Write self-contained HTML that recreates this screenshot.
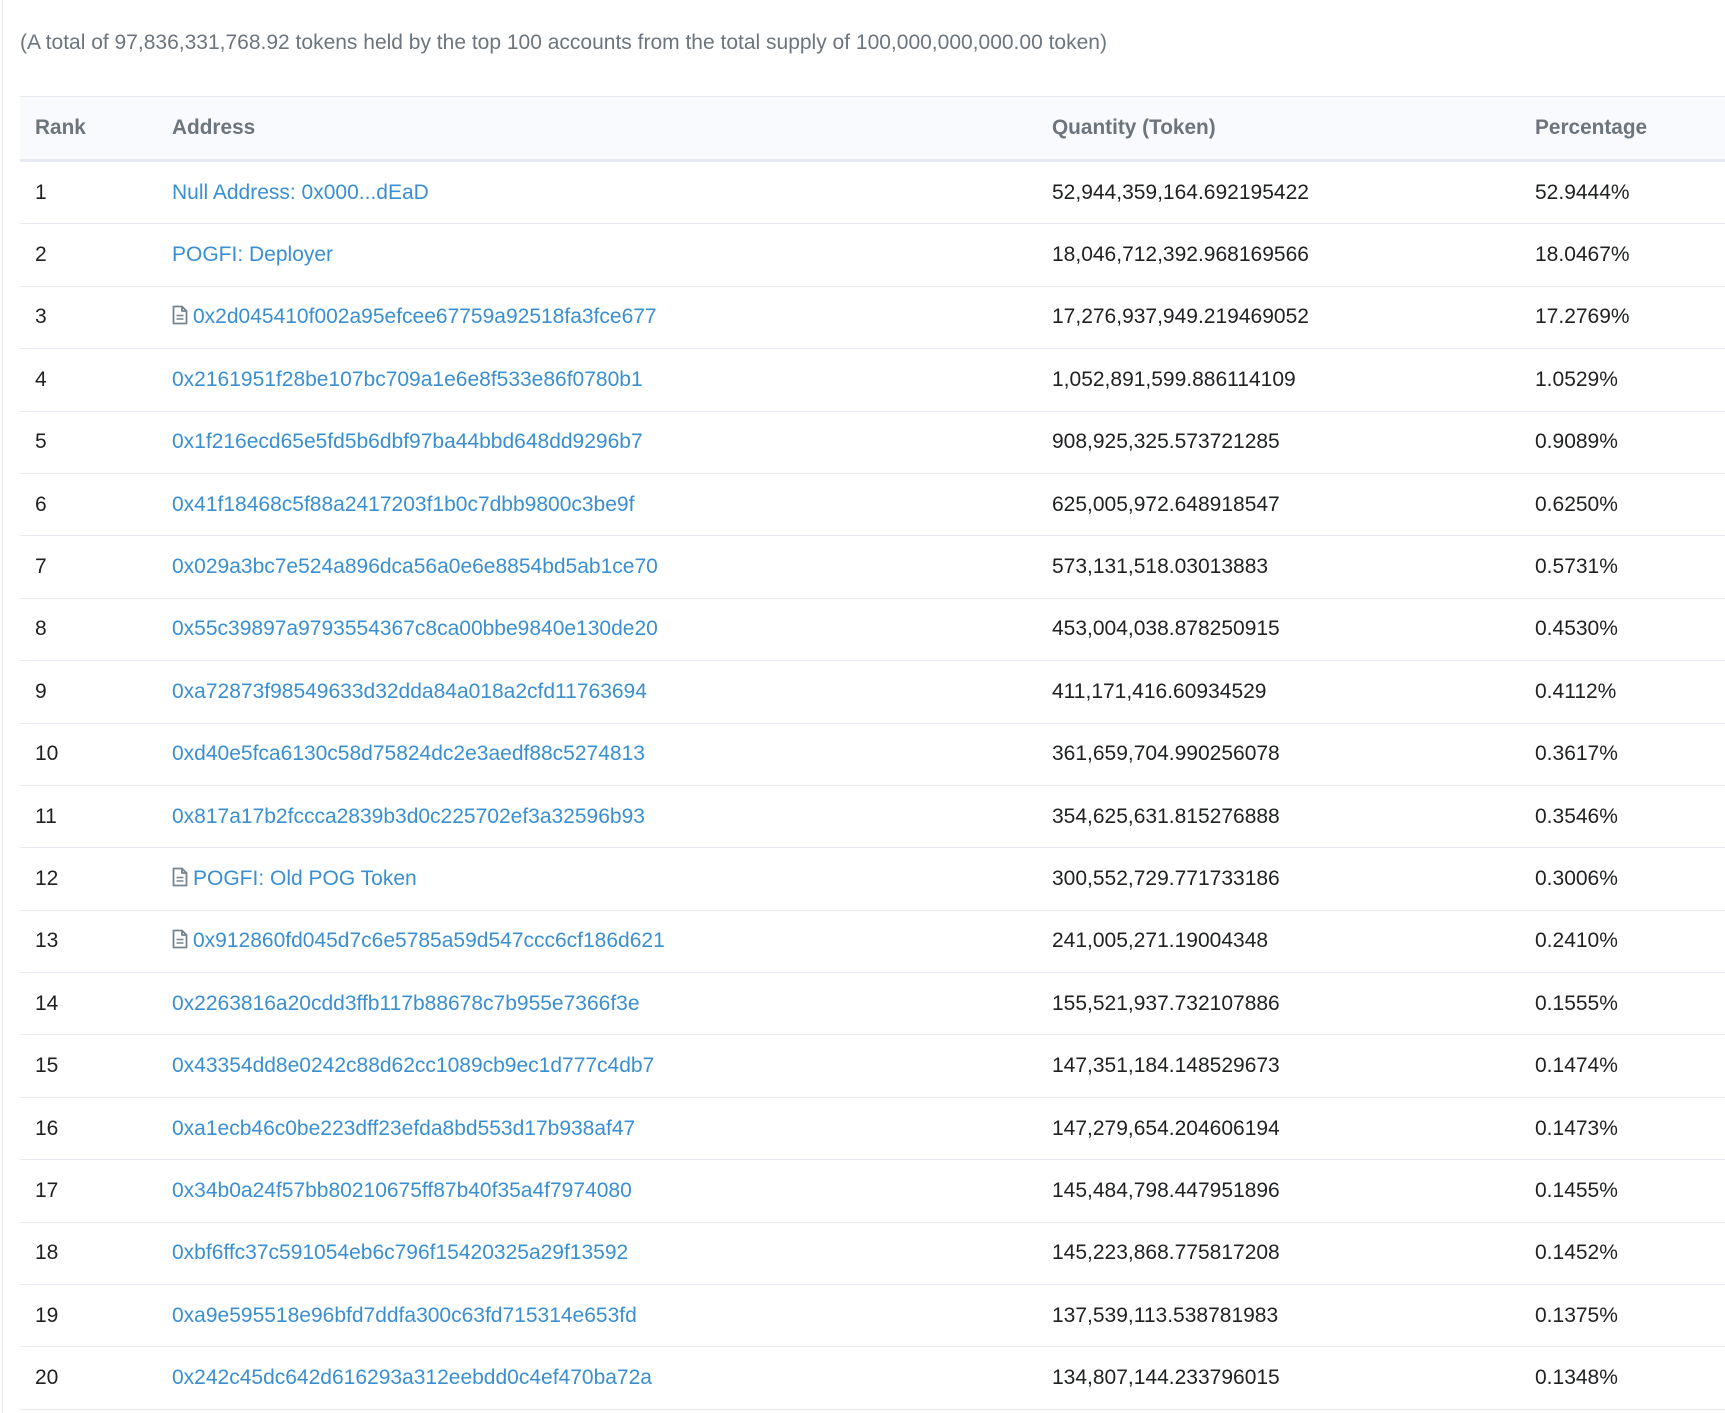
<!DOCTYPE html>
<html><head><meta charset="utf-8"><style>
html,body{margin:0;padding:0;background:#fff;width:1725px;height:1413px;overflow:hidden;font-family:"Liberation Sans",Arial,sans-serif;}
.vl{position:absolute;left:2px;top:0;width:1px;height:1413px;background:#e9ecef;}
.sum{position:absolute;left:20px;top:31px;font-size:21px;color:#6c757d;white-space:nowrap;}
table{position:absolute;left:20px;top:96px;width:1705px;border-collapse:collapse;table-layout:fixed;}
th{background:#f8fafd;height:62px;text-align:left;font-weight:bold;font-size:20.8px;color:#6c757d;border-top:1px solid #e7eaf3;border-bottom:3px solid #e7eaf3;padding:0;}
td{height:61.4px;border-bottom:1px solid #e7eaf3;font-size:21px;color:#1e2022;padding:0;white-space:nowrap;overflow:hidden;}
td a{color:#3a8fd0;text-decoration:none;}
th:first-child,td:first-child{padding-left:15px}
svg{vertical-align:-2px;margin-right:5px}
</style></head><body>
<div class="vl"></div>
<div class="sum">(A total of 97,836,331,768.92 tokens held by the top 100 accounts from the total supply of 100,000,000,000.00 token)</div>
<table>
<colgroup><col style="width:152px"><col style="width:880px"><col style="width:483px"><col></colgroup>
<tr><th>Rank</th><th>Address</th><th>Quantity (Token)</th><th>Percentage</th></tr>
<tr><td>1</td><td><a>Null Address: 0x000...dEaD</a></td><td>52,944,359,164.692195422</td><td>52.9444%</td></tr>
<tr><td>2</td><td><a>POGFI: Deployer</a></td><td>18,046,712,392.968169566</td><td>18.0467%</td></tr>
<tr><td>3</td><td><svg width="16" height="20" viewBox="0 0 16 20"><path d="M1.5 1.5h8.5l4.5 4.5v12.5h-13z M10 1.5v4.5h4.5" fill="none" stroke="#77838f" stroke-width="1.8" stroke-linejoin="round"/><path d="M4.5 10.5h7M4.5 14h7" stroke="#77838f" stroke-width="1.6"/></svg><a>0x2d045410f002a95efcee67759a92518fa3fce677</a></td><td>17,276,937,949.219469052</td><td>17.2769%</td></tr>
<tr><td>4</td><td><a>0x2161951f28be107bc709a1e6e8f533e86f0780b1</a></td><td>1,052,891,599.886114109</td><td>1.0529%</td></tr>
<tr><td>5</td><td><a>0x1f216ecd65e5fd5b6dbf97ba44bbd648dd9296b7</a></td><td>908,925,325.573721285</td><td>0.9089%</td></tr>
<tr><td>6</td><td><a>0x41f18468c5f88a2417203f1b0c7dbb9800c3be9f</a></td><td>625,005,972.648918547</td><td>0.6250%</td></tr>
<tr><td>7</td><td><a>0x029a3bc7e524a896dca56a0e6e8854bd5ab1ce70</a></td><td>573,131,518.03013883</td><td>0.5731%</td></tr>
<tr><td>8</td><td><a>0x55c39897a9793554367c8ca00bbe9840e130de20</a></td><td>453,004,038.878250915</td><td>0.4530%</td></tr>
<tr><td>9</td><td><a>0xa72873f98549633d32dda84a018a2cfd11763694</a></td><td>411,171,416.60934529</td><td>0.4112%</td></tr>
<tr><td>10</td><td><a>0xd40e5fca6130c58d75824dc2e3aedf88c5274813</a></td><td>361,659,704.990256078</td><td>0.3617%</td></tr>
<tr><td>11</td><td><a>0x817a17b2fccca2839b3d0c225702ef3a32596b93</a></td><td>354,625,631.815276888</td><td>0.3546%</td></tr>
<tr><td>12</td><td><svg width="16" height="20" viewBox="0 0 16 20"><path d="M1.5 1.5h8.5l4.5 4.5v12.5h-13z M10 1.5v4.5h4.5" fill="none" stroke="#77838f" stroke-width="1.8" stroke-linejoin="round"/><path d="M4.5 10.5h7M4.5 14h7" stroke="#77838f" stroke-width="1.6"/></svg><a>POGFI: Old POG Token</a></td><td>300,552,729.771733186</td><td>0.3006%</td></tr>
<tr><td>13</td><td><svg width="16" height="20" viewBox="0 0 16 20"><path d="M1.5 1.5h8.5l4.5 4.5v12.5h-13z M10 1.5v4.5h4.5" fill="none" stroke="#77838f" stroke-width="1.8" stroke-linejoin="round"/><path d="M4.5 10.5h7M4.5 14h7" stroke="#77838f" stroke-width="1.6"/></svg><a>0x912860fd045d7c6e5785a59d547ccc6cf186d621</a></td><td>241,005,271.19004348</td><td>0.2410%</td></tr>
<tr><td>14</td><td><a>0x2263816a20cdd3ffb117b88678c7b955e7366f3e</a></td><td>155,521,937.732107886</td><td>0.1555%</td></tr>
<tr><td>15</td><td><a>0x43354dd8e0242c88d62cc1089cb9ec1d777c4db7</a></td><td>147,351,184.148529673</td><td>0.1474%</td></tr>
<tr><td>16</td><td><a>0xa1ecb46c0be223dff23efda8bd553d17b938af47</a></td><td>147,279,654.204606194</td><td>0.1473%</td></tr>
<tr><td>17</td><td><a>0x34b0a24f57bb80210675ff87b40f35a4f7974080</a></td><td>145,484,798.447951896</td><td>0.1455%</td></tr>
<tr><td>18</td><td><a>0xbf6ffc37c591054eb6c796f15420325a29f13592</a></td><td>145,223,868.775817208</td><td>0.1452%</td></tr>
<tr><td>19</td><td><a>0xa9e595518e96bfd7ddfa300c63fd715314e653fd</a></td><td>137,539,113.538781983</td><td>0.1375%</td></tr>
<tr><td>20</td><td><a>0x242c45dc642d616293a312eebdd0c4ef470ba72a</a></td><td>134,807,144.233796015</td><td>0.1348%</td></tr>
</table>
</body></html>
